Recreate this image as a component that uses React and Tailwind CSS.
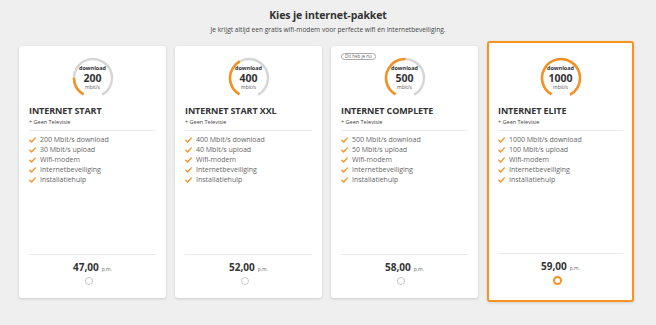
import React from "react";

const ORANGE = "#f7901e";

function Gauge({ value }) {
  const r = 19;
  const C = 2 * Math.PI * r;
  const span = (300 / 360) * C;
  const frac = Math.min(value / 1000, 1);
  return (
    <div className="relative w-[42px] h-[42px]">
      <svg width="42" height="42" viewBox="0 0 42 42" className="absolute inset-0">
        <circle
          cx="21"
          cy="21"
          r={r}
          fill="none"
          stroke="#d6d6d8"
          strokeWidth="2.5"
          strokeDasharray={`${span} ${C}`}
          transform="rotate(120 21 21)"
        />
        <circle
          cx="21"
          cy="21"
          r={r}
          fill="none"
          stroke={ORANGE}
          strokeWidth="2.5"
          strokeDasharray={`${span * frac} ${C}`}
          transform="rotate(120 21 21)"
        />
      </svg>
      <div className="absolute inset-0 flex flex-col items-center justify-center">
        <span className="text-[5.5px] leading-[7px] font-bold text-[#333]">download</span>
        <span className="text-[10.5px] leading-[12px] font-bold text-[#333]">{value}</span>
        <span className="text-[5px] leading-[7px] text-[#555]">mbit/s</span>
      </div>
    </div>
  );
}

function Check() {
  return (
    <svg width="7" height="6" viewBox="0 0 7 6" className="shrink-0">
      <polyline points="0.8,3.2 2.6,5 6.3,0.9" fill="none" stroke={ORANGE} strokeWidth="1.3" strokeLinecap="round" strokeLinejoin="round" />
    </svg>
  );
}

function Card({ speed, name, up, price, selected, current }) {
  const items = [
    `${speed} Mbit/s download`,
    `${up} Mbit/s upload`,
    "Wifi-modem",
    "Internetbeveiliging",
    "Installatiehulp",
  ];
  return (
    <div
      className={
        selected
          ? "relative w-[147px] h-[261px] -mt-[5px] bg-white rounded-[3px] border-2 border-[#f7941f] pt-[3px] pb-[2px] px-[9px] flex flex-col shadow-[0_1px_3px_rgba(0,0,0,0.12)]"
          : "relative w-[147px] h-[252px] bg-white rounded-[3px] px-[10px] flex flex-col shadow-[0_1px_3px_rgba(0,0,0,0.15)]"
      }
    >
      {current && (
        <div className="absolute left-[10px] top-[7px] h-[7px] px-[3px] rounded-full border border-[#aaa] flex items-center text-[4.5px] leading-none text-[#666]">
          Dit heb je nu
        </div>
      )}
      <div className="pt-[11px] flex justify-center">
        <Gauge value={speed} />
      </div>
      <div className="mt-[6px] text-[9px] leading-[12px] font-bold text-[#333] tracking-[-0.1px]">{name}</div>
      <div className="mt-[1px] text-[5.5px] leading-[8px] text-[#444]">+ Geen Televisie</div>
      <div className="mt-[4px] border-t border-[#ececec]" />
      <div className="mt-[3.5px] flex flex-col">
        {items.map((t) => (
          <div key={t} className="flex items-center gap-[4px] h-[10px]">
            <Check />
            <span className="text-[7px] leading-[10px] text-[#666]">{t}</span>
          </div>
        ))}
      </div>
      <div className="mt-auto border-t border-[#ececec]" />
      <div className="mt-[5px] flex items-baseline justify-center gap-[3px] h-[14px]">
        <span className="text-[10px] leading-[14px] font-bold text-[#333]">{price}</span>
        <span className="text-[5px] text-[#666]">p.m.</span>
      </div>
      <div className="mt-[3px] mb-[13px] flex justify-center pr-[7px]">
        <div
          className={
            selected
              ? "w-[9px] h-[9px] rounded-full border-2 border-[#f7901e]"
              : "w-[8px] h-[8px] rounded-full border border-[#c8c8c8]"
          }
        />
      </div>
    </div>
  );
}

export default function App() {
  return (
    <div
      className="w-[656px] h-[325px] bg-[#efeff0] overflow-hidden"
      style={{ fontFamily: '"Open Sans", "Liberation Sans", sans-serif' }}
    >
      <div className="pt-[7px] text-center text-[10.5px] leading-[16px] font-bold text-[#333] tracking-[-0.1px]">
        Kies je internet-pakket
      </div>
      <div className="mt-[2px] text-center text-[6.6px] leading-[10px] text-[#444]">
        Je krijgt altijd een gratis wifi-modem voor perfecte wifi én internetbeveiliging.
      </div>
      <div className="mt-[11px] ml-[19px] flex items-start gap-[9px]">
        <Card speed={200} up={30} name="INTERNET START" price="47,00" />
        <Card speed={400} up={40} name="INTERNET START XXL" price="52,00" />
        <Card speed={500} up={50} name="INTERNET COMPLETE" price="58,00" current />
        <Card speed={1000} up={100} name="INTERNET ELITE" price="59,00" selected />
      </div>
    </div>
  );
}
